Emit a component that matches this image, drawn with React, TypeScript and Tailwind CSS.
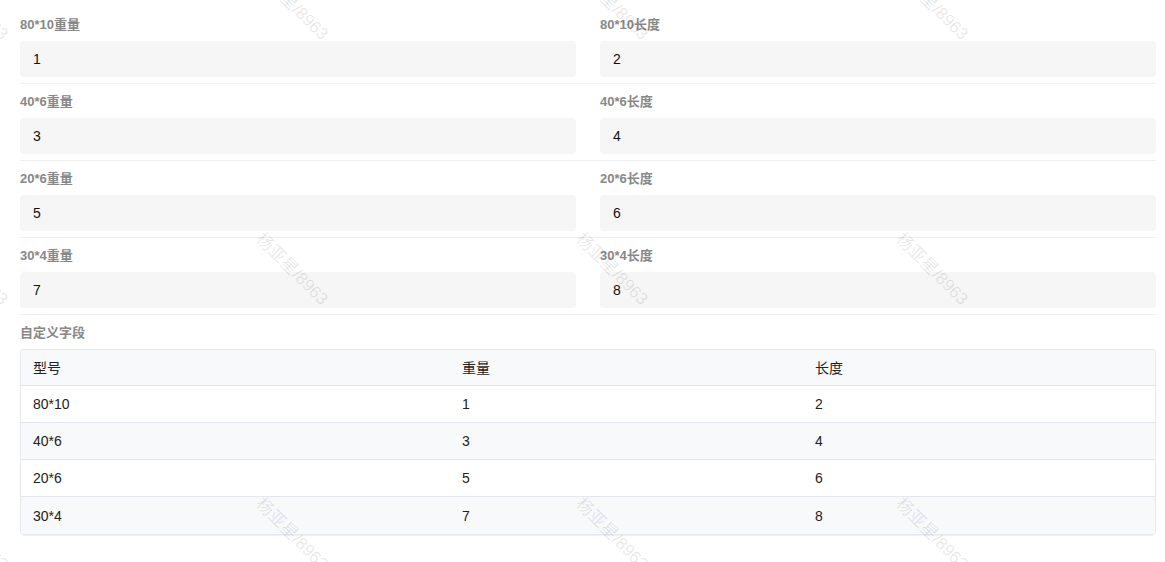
import React from "react";

const fields: [string, string, string, string][] = [
  ["80*10重量", "1", "80*10长度", "2"],
  ["40*6重量", "3", "40*6长度", "4"],
  ["20*6重量", "5", "20*6长度", "6"],
  ["30*4重量", "7", "30*4长度", "8"],
];

const rows: [string, string, string][] = [
  ["80*10", "1", "2"],
  ["40*6", "3", "4"],
  ["20*6", "5", "6"],
  ["30*4", "7", "8"],
];

const wmX = [-65, 255, 575, 895];
const wmY = [-30, 235, 500];

function Field({ label, value }: { label: string; value: string }) {
  return (
    <div className="flex flex-col">
      <div className="h-5 leading-5 pt-px text-[13px] font-bold text-[#888888]">{label}</div>
      <div className="mt-[7px] h-9 rounded-[4px] bg-[#f6f6f6] px-[13px] flex items-center text-[14px] text-[#111]">
        {value}
      </div>
    </div>
  );
}

export default function App() {
  return (
    <div
      className="relative w-[1165px] h-[562px] overflow-hidden bg-white pl-5 pr-[9px] pt-[7px]"
      style={{ fontFamily: '"Liberation Sans", Arial, "Noto Sans CJK SC", sans-serif' }}
    >
      {fields.map(([l1, v1, l2, v2], i) => (
        <div key={i} className="pt-[7px] pb-[6px] border-b border-[#eeeeee] grid grid-cols-2 gap-6">
          <Field label={l1} value={v1} />
          <Field label={l2} value={v2} />
        </div>
      ))}
      <div className="pt-[7px]">
        <div className="h-5 leading-5 pt-px text-[13px] font-bold text-[#888888]">自定义字段</div>
        <div className="mt-[7px] border border-[#e4e7ed] rounded-[4px] overflow-hidden shadow-[0_1px_1px_rgba(0,0,0,0.06)] text-[14px] text-[#222]">
          <div className="grid grid-cols-[429px_353px_1fr] h-9 items-center pt-px bg-[#f8f9fb] border-b border-[#e4e7ed]">
            <div className="px-3">型号</div>
            <div className="px-3">重量</div>
            <div className="px-3">长度</div>
          </div>
          {rows.map(([a, b, c], i) => (
            <div
              key={i}
              className={`grid grid-cols-[429px_353px_1fr] h-[37px] items-center pt-px ${
                i < rows.length - 1 ? "border-b border-[#e4e7ed]" : ""
              } ${i % 2 === 1 ? "bg-[#f8f9fb]" : "bg-white"}`}
            >
              <div className="px-3">{a}</div>
              <div className="px-3">{b}</div>
              <div className="px-3">{c}</div>
            </div>
          ))}
        </div>
      </div>

      <div className="pointer-events-none absolute inset-0">
        {wmY.map((y) =>
          wmX.map((x) => (
            <span
              key={`${x}-${y}`}
              className="absolute whitespace-nowrap text-[17px] leading-none text-black/10 origin-top-left rotate-45"
              style={{ left: x + 10, top: y - 5 }}
            >
              杨亚星/8963
            </span>
          ))
        )}
      </div>
    </div>
  );
}
